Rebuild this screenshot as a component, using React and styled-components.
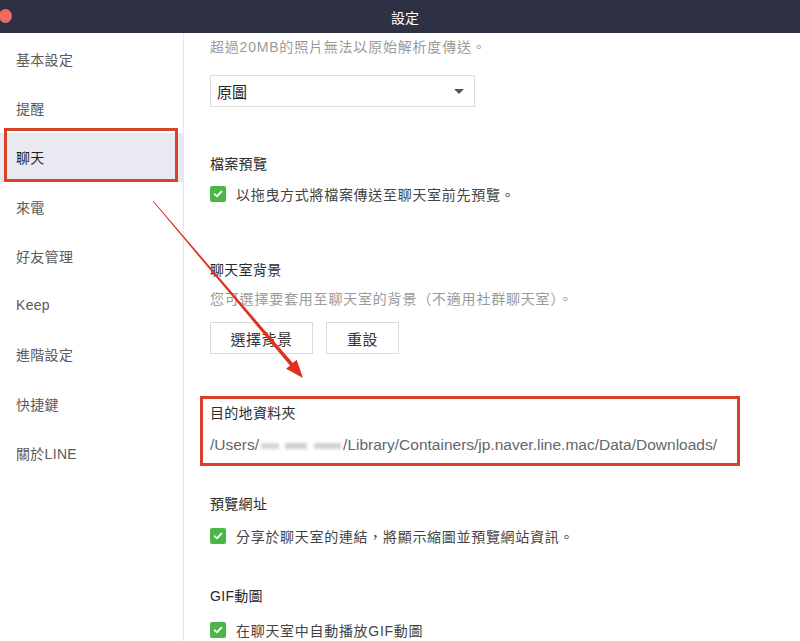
import React from "react";
import styled, { createGlobalStyle } from "styled-components";

const GlobalStyle = createGlobalStyle`
  html, body {
    margin: 0;
    padding: 0;
    background: #fff;
  }
  body {
    font-family: "Liberation Sans", "Noto Sans CJK TC", sans-serif;
    -webkit-font-smoothing: antialiased;
  }
`;

const Window = styled.div`
  position: relative;
  width: 800px;
  height: 641px;
  overflow: hidden;
  display: flex;
  flex-direction: column;
  background: #fff;
`;

const TitleBar = styled.div`
  height: 33px;
  flex-shrink: 0;
  background: #2d3143;
  display: flex;
  align-items: center;
  justify-content: center;
  position: relative;
  color: #fff;
  font-size: 14px;
  padding-left: 10px;
`;

const CloseDot = styled.span`
  position: absolute;
  left: 0;
  top: 9px;
  width: 13px;
  height: 14px;
  margin-left: -1px;
  border-radius: 50%;
  background: #ec6a5e;
`;

const Body = styled.div`
  flex: 1;
  display: flex;
  min-height: 0;
`;

const Sidebar = styled.nav`
  width: 183px;
  flex-shrink: 0;
  border-right: 1px solid #e6e6e6;
  padding-top: 1px;
  display: flex;
  flex-direction: column;
`;

const NavItem = styled.div`
  position: relative;
  height: 49.3px;
  display: flex;
  align-items: center;
  padding-left: 16px;
  font-size: 14px;
  letter-spacing: 0.3px;
  color: ${({ $active }) => ($active ? "#1e1e1e" : "#5a5a5a")};
  background: ${({ $active }) => ($active ? "#e9e9f2" : "transparent")};
`;

const Highlight = styled.span`
  position: absolute;
  left: 4px;
  top: -5px;
  width: 174px;
  height: 54px;
  box-sizing: border-box;
  border: 3px solid #d6432a;
  pointer-events: none;
`;

const Content = styled.main`
  flex: 1;
  padding: 4px 0 0 26px;
  display: flex;
  flex-direction: column;
`;

const Note = styled.div`
  font-size: 14px;
  line-height: 20px;
  letter-spacing: 0.8px;
  color: #9a9a9a;
  margin-top: ${({ $top }) => $top || 0}px;
`;

const SectionTitle = styled.div`
  font-size: 14px;
  line-height: 20px;
  letter-spacing: 0.3px;
  color: #2a2a2a;
  margin-top: ${({ $top }) => $top || 0}px;
`;

const Select = styled.div`
  margin-top: 18px;
  width: 265px;
  height: 32px;
  box-sizing: border-box;
  border: 1px solid #dcdcdc;
  display: flex;
  align-items: center;
  justify-content: space-between;
  padding: 0 10px 0 6px;
  font-size: 15px;
  color: #222;
`;

const Caret = styled.span`
  width: 0;
  height: 0;
  border-left: 5px solid transparent;
  border-right: 5px solid transparent;
  border-top: 5px solid #555;
`;

const CheckRow = styled.div`
  display: flex;
  align-items: center;
  gap: 10px;
  height: 20px;
  margin-top: ${({ $top }) => $top || 10}px;
  font-size: 14px;
  letter-spacing: 0.7px;
  color: #444;
`;

const CheckBox = styled.span`
  width: 16px;
  height: 16px;
  border-radius: 2px;
  background: #4cb648;
  display: flex;
  align-items: center;
  justify-content: center;
  flex-shrink: 0;
`;

const Buttons = styled.div`
  display: flex;
  gap: 13px;
  margin-top: 13px;
`;

const Button = styled.div`
  width: ${({ $w }) => $w}px;
  height: 32px;
  box-sizing: border-box;
  border: 1px solid #dadada;
  background: #fff;
  display: flex;
  align-items: center;
  justify-content: center;
  font-size: 15px;
  letter-spacing: 0.5px;
  color: #333;
`;

const MarkedBox = styled.div`
  margin: 42px 0 0 -10px;
  width: 540px;
  box-sizing: border-box;
  border: 3px solid #d6432a;
  padding: 4px 0 8px 7px;
`;

const PathText = styled.div`
  margin-top: 12px;
  font-size: 15.5px;
  line-height: 20px;
  color: #666;
  white-space: nowrap;
  display: flex;
  align-items: center;
`;

const Blurred = styled.span`
  display: inline-block;
  width: 80px;
  height: 6px;
  margin: 2px 2px 0;
  background: linear-gradient(
    90deg,
    #d6d6d6 0 22%,
    transparent 22% 30%,
    #cfcfcf 30% 58%,
    transparent 58% 66%,
    #d2d2d2 66% 100%
  );
  filter: blur(1.6px);
`;

const Arrow = styled.svg`
  position: absolute;
  left: 0;
  top: 0;
  pointer-events: none;
`;

function Check() {
  return (
    <CheckBox>
      <svg width="10" height="10" viewBox="0 0 10 10">
        <path d="M1.6 5.2 L4 7.4 L8.4 2.6" fill="none" stroke="#fff" strokeWidth="1.8" strokeLinecap="round" strokeLinejoin="round" />
      </svg>
    </CheckBox>
  );
}

const navItems = ["基本設定", "提醒", "聊天", "來電", "好友管理", "Keep", "進階設定", "快捷鍵", "關於LINE"];

export default function App() {
  return (
    <Window>
      <GlobalStyle />
      <TitleBar>
        <CloseDot />
        設定
      </TitleBar>
      <Body>
        <Sidebar>
          {navItems.map((item) => (
            <NavItem key={item} $active={item === "聊天"}>
              {item}
              {item === "聊天" && <Highlight />}
            </NavItem>
          ))}
        </Sidebar>
        <Content>
          <Note>超過20MB的照片無法以原始解析度傳送。</Note>
          <Select>
            原圖
            <Caret />
          </Select>

          <SectionTitle $top={47}>檔案預覽</SectionTitle>
          <CheckRow>
            <Check />
            以拖曳方式將檔案傳送至聊天室前先預覽。
          </CheckRow>

          <SectionTitle $top={56}>聊天室背景</SectionTitle>
          <Note $top={9}>您可選擇要套用至聊天室的背景（不適用社群聊天室）。</Note>
          <Buttons>
            <Button $w={103}>選擇背景</Button>
            <Button $w={73}>重設</Button>
          </Buttons>

          <MarkedBox>
            <SectionTitle>目的地資料夾</SectionTitle>
            <PathText>
              <span>/Users/</span>
              <Blurred />
              <span>/Library/Containers/jp.naver.line.mac/Data/Downloads/</span>
            </PathText>
          </MarkedBox>

          <SectionTitle $top={28}>預覽網址</SectionTitle>
          <CheckRow $top={12}>
            <Check />
            分享於聊天室的連結，將顯示縮圖並預覽網站資訊。
          </CheckRow>

          <SectionTitle $top={40}>GIF動圖</SectionTitle>
          <CheckRow $top={14}>
            <Check />
            在聊天室中自動播放GIF動圖
          </CheckRow>
        </Content>
      </Body>
      <Arrow width="800" height="641" viewBox="0 0 800 641">
        <polygon
          points="152.7,201.3 153.3,200.7 292.8,363.1 296.7,359.8 303,378 286.1,368.8 290,365.5"
          fill="#e0301e"
        />
      </Arrow>
    </Window>
  );
}
